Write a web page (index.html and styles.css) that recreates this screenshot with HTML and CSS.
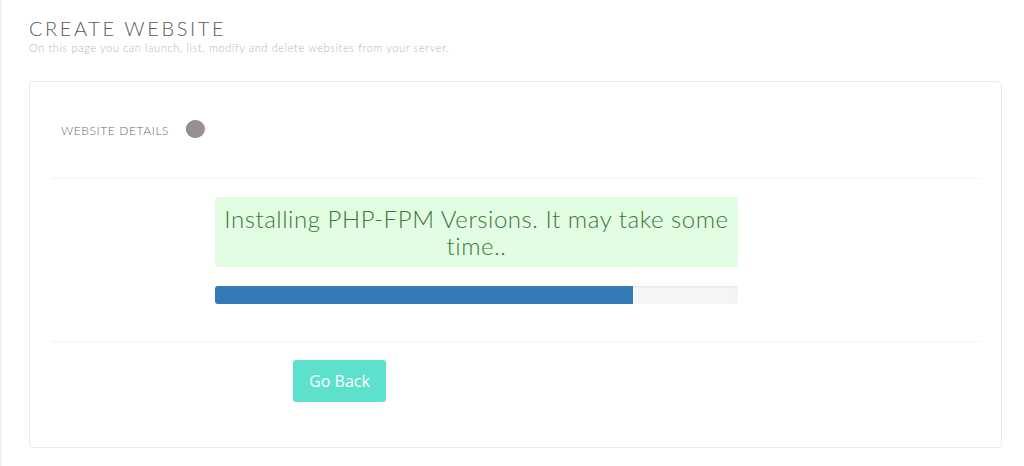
FILE: index.html
```html
<!DOCTYPE html>
<html>
<head>
<meta charset="utf-8">
<link rel="stylesheet" href="styles.css">
</head>
<body>
<div class="page">
  <h1 class="title">CREATE WEBSITE</h1>
  <p class="subtitle">On this page you can launch, list, modify and delete websites from your server.</p>
  <div class="card">
    <div class="details">
      <span class="details-label">WEBSITE DETAILS</span>
      <span class="dot"></span>
    </div>
    <div class="divider"></div>
    <div class="status">
      <div class="alert">Installing PHP-FPM Versions. It may take some time..</div>
      <div class="progress"><div class="progress-bar" style="width: 80%"></div></div>
    </div>
    <div class="divider"></div>
    <div class="actions">
      <button class="btn">Go Back</button>
    </div>
  </div>
</div>
</body>
</html>
```
FILE: styles.css
```css
html, body {
  margin: 0;
  padding: 0;
  background: #fff;
}
body {
  font-family: "Lato", "Open Sans", sans-serif;
}
.page {
  border-left: 2px solid #f0f1f3;
  min-height: 466px;
  box-sizing: border-box;
  padding: 16px 22px 0 27px;
}
.title {
  margin: 0;
  font-size: 20px;
  line-height: 24px;
  font-weight: 300;
  color: #5a5a5a;
  letter-spacing: 2.6px;
}
.subtitle {
  margin: 1px 0 0;
  font-size: 11px;
  line-height: 14px;
  font-weight: 300;
  color: #b5b5b5;
  letter-spacing: 0.62px;
}
.card {
  margin-top: 26px;
  border: 1px solid #e9ecef;
  border-radius: 4px;
  height: 367px;
  box-sizing: border-box;
  padding: 0 21px;
}
.details {
  display: flex;
  align-items: center;
  height: 96px;
  padding-left: 10px;
}
.details-label {
  font-size: 12px;
  color: #6a6a6a;
  font-weight: 300;
  letter-spacing: 0.6px;
}
.dot {
  width: 19px;
  height: 18px;
  border-radius: 50%;
  background: #9a9090;
  box-shadow: inset 2px 0 2px #7f8fa8;
  margin-left: 17px;
  margin-top: -2px;
}
.divider {
  border-top: 1px dotted #e6e8ea;
}
.status {
  padding: 18px 0 37px 164px;
}
.alert {
  width: 523px;
  height: 70px;
  box-sizing: border-box;
  background: #e3fde2;
  color: #3c763d;
  font-size: 24px;
  line-height: 27px;
  font-weight: 300;
  text-align: center;
  padding: 8px 8px 0;
  border-radius: 2px;
  letter-spacing: 0.55px;
}
.progress {
  margin-top: 19px;
  width: 523px;
  height: 18px;
  background: #f5f5f5;
  border-radius: 3px;
  overflow: hidden;
  box-shadow: inset 0 1px 2px rgba(0,0,0,0.06);
}
.progress-bar {
  height: 100%;
  background: #337ab7;
}
.actions {
  padding: 18px 0 0 242px;
}
.btn {
  width: 93px;
  height: 42px;
  border: none;
  border-radius: 3px;
  background: #5de0cc;
  color: #fff;
  font-family: "Open Sans", sans-serif;
  font-size: 16px;
  padding: 0;
}
```
